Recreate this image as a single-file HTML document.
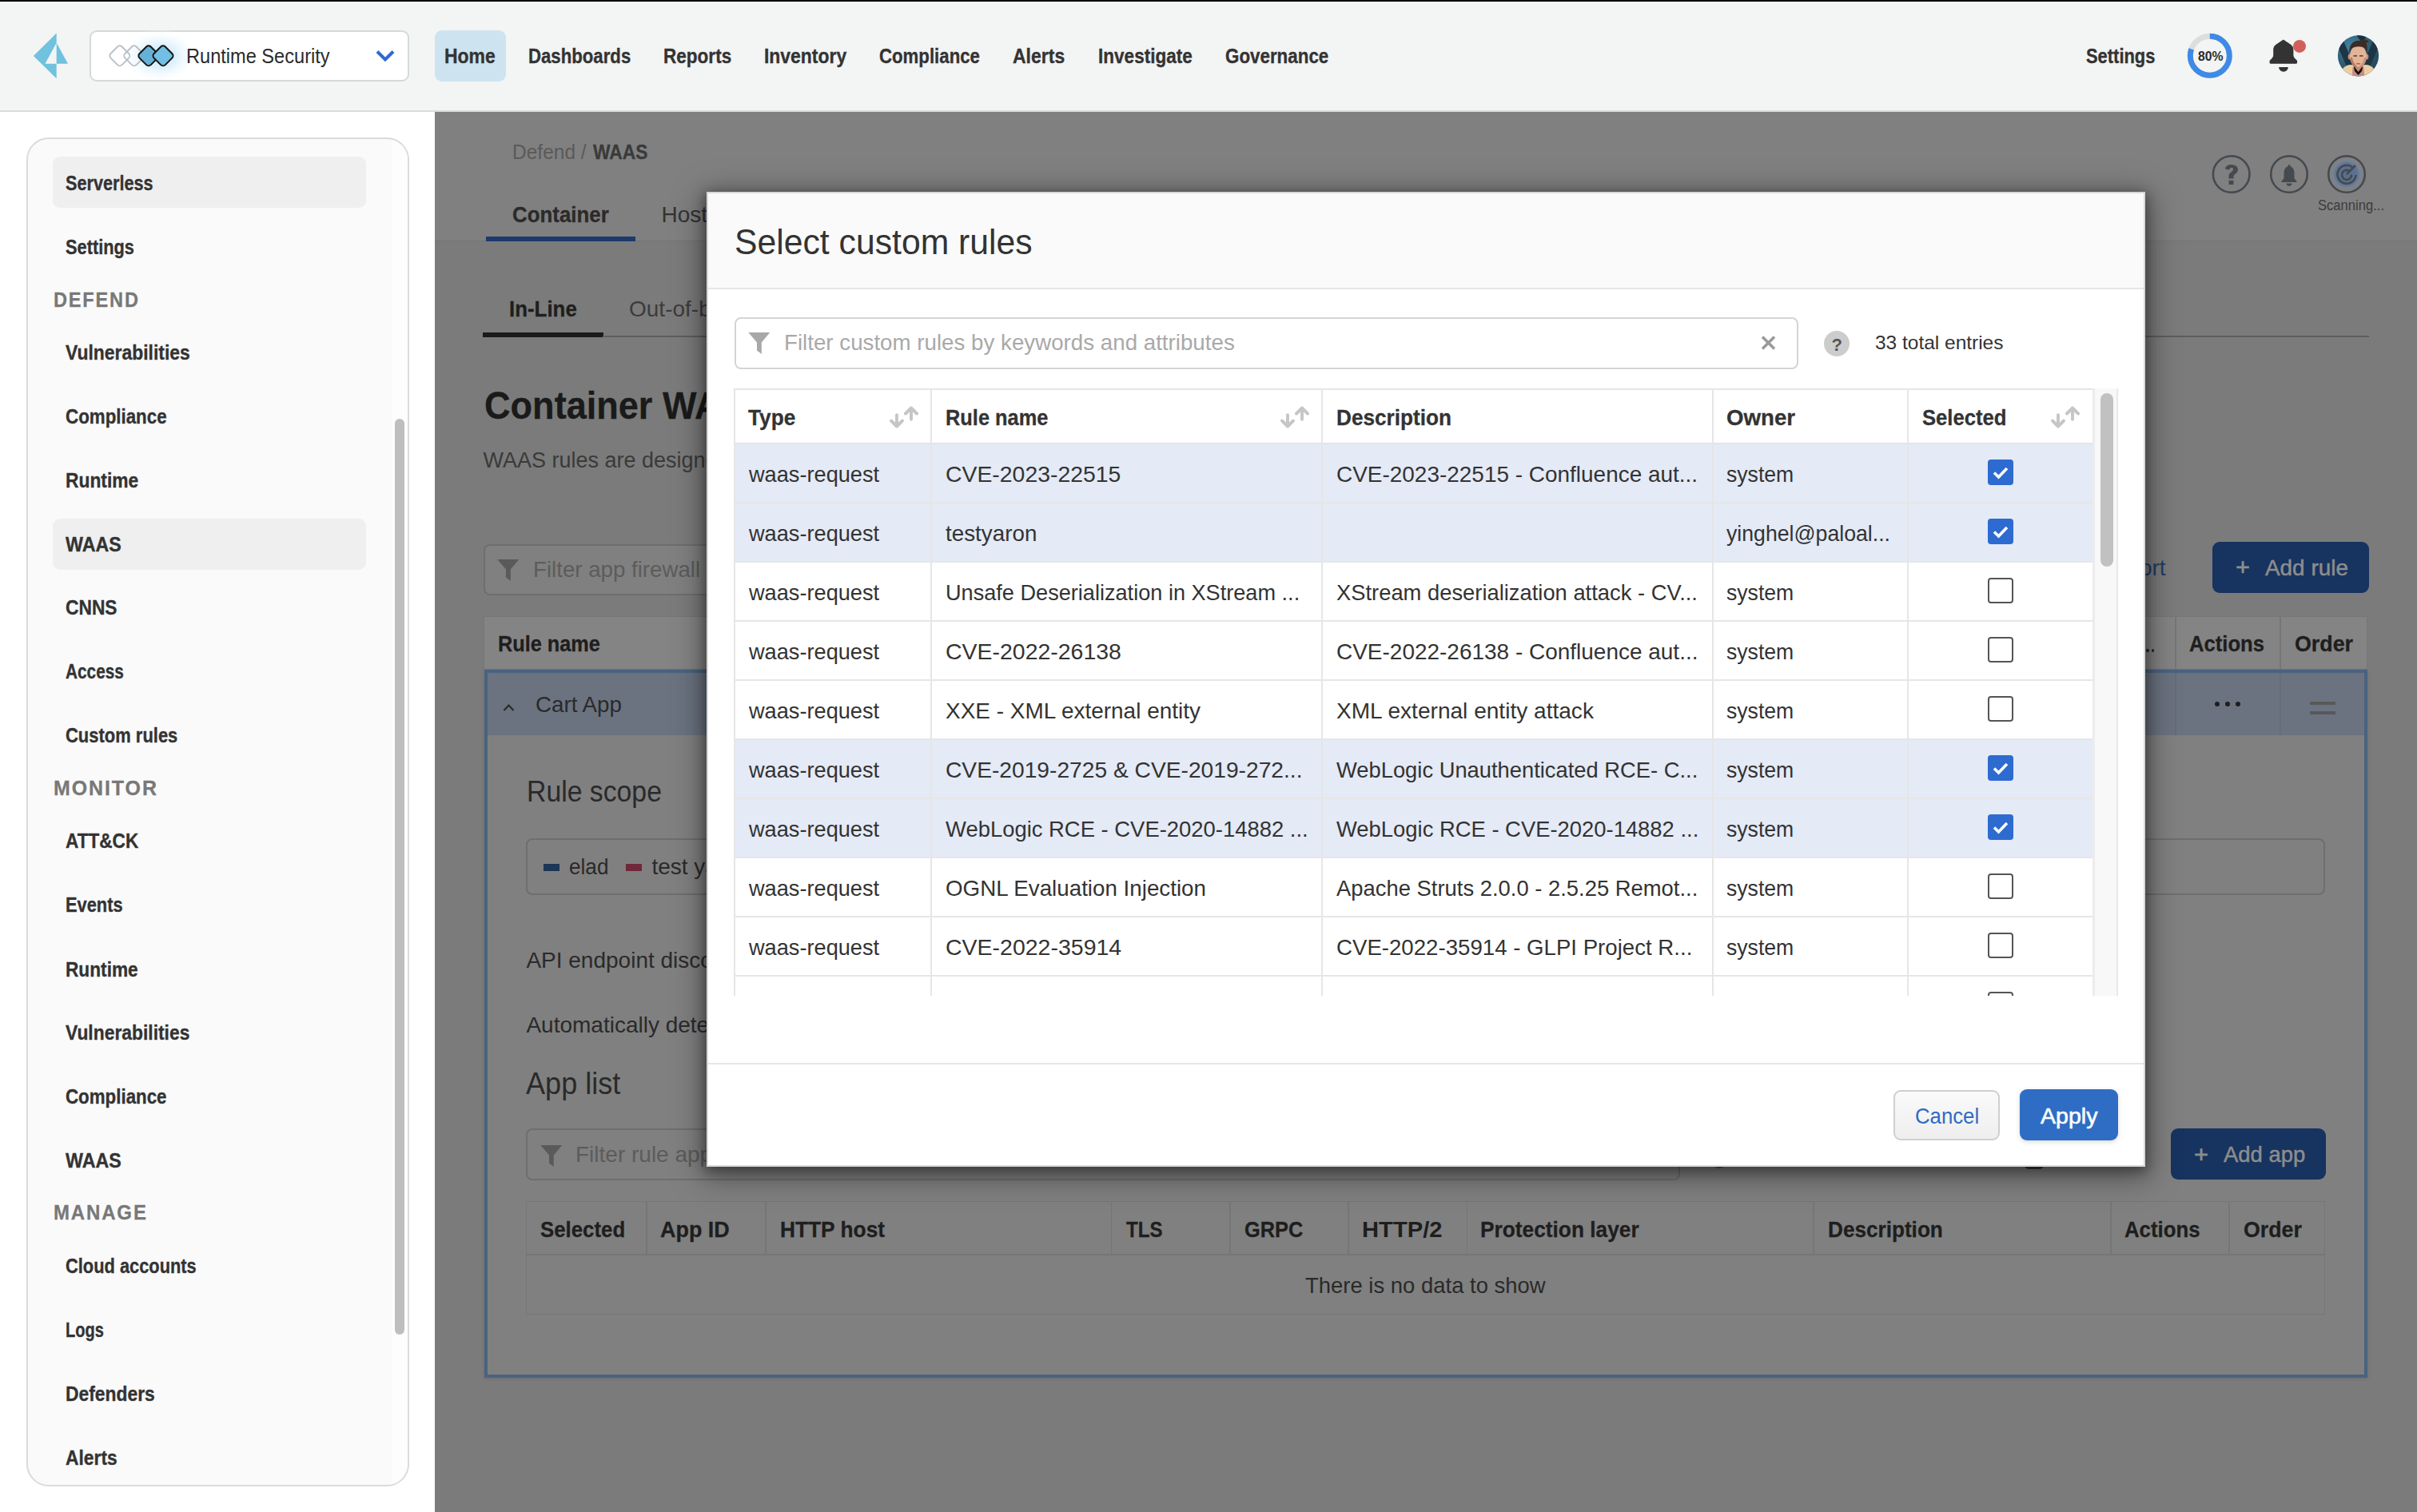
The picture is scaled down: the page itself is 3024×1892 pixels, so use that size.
<!DOCTYPE html>
<html><head><meta charset="utf-8"><title>Select custom rules</title>
<style>
html,body{margin:0;padding:0;}
body{width:3024px;height:1892px;position:relative;overflow:hidden;background:#fff;font-family:"Liberation Sans", sans-serif;}
div{font-family:"Liberation Sans", sans-serif;}
</style></head><body>
<div style="position:absolute;left:0px;top:0px;width:3024px;height:2px;background:#000"></div>
<div style="position:absolute;left:0px;top:2px;width:3024px;height:136px;background:#f3f4f4"></div>
<div style="position:absolute;left:0px;top:138px;width:3024px;height:2px;background:#d9dcdc"></div>
<div style="position:absolute;left:0px;top:140px;width:544px;height:1752px;background:#ffffff"></div>
<svg style="position:absolute;left:0;top:0" width="100" height="110">
<polygon fill="#70c2de" points="41.9,69.9 70.7,41.4 70.7,53.5 56.5,79.7 70.7,79.7 70.7,98.3"/>
<polygon fill="#70c2de" points="70.7,53.5 85,79.7 70.7,79.7"/>
</svg>
<div style="position:absolute;left:112px;top:38px;width:400px;height:64px;background:#fff;border:2px solid #d6d9d9;border-radius:9px;box-sizing:border-box"></div>
<svg style="position:absolute;left:110px;top:36px" width="150" height="64">
<defs><radialGradient id="glow" cx="0.5" cy="0.5" r="0.5"><stop offset="0" stop-color="#cdeaf8"/><stop offset="0.45" stop-color="#dff2fb"/><stop offset="1" stop-color="#ffffff" stop-opacity="0"/></radialGradient></defs>
<ellipse cx="90" cy="34" rx="48" ry="34" fill="url(#glow)"/>
<g>
<rect x="-10" y="-10" width="20" height="20" rx="4" transform="translate(39.8,33.8) rotate(45)" fill="none" stroke="#b9c0cb" stroke-width="1.9"/>
<rect x="-10" y="-10" width="20" height="20" rx="4" transform="translate(57.8,33.8) rotate(45)" fill="none" stroke="#b9c0cb" stroke-width="1.9"/>
<rect x="-10" y="-10" width="20" height="20" rx="4" transform="translate(75.9,33.8) rotate(45)" fill="#66b1d8" stroke="#151515" stroke-width="2"/>
<rect x="-10" y="-10" width="20" height="20" rx="4" transform="translate(94,33.8) rotate(45)" fill="#72bee4" stroke="#151515" stroke-width="2"/>
</g></svg>
<div style="position:absolute;left:233.0px;top:57.0px;font-size:26px;line-height:26px;font-weight:400;color:#2b2b2b;white-space:nowrap;transform:scaleX(0.9071);transform-origin:0 0;">Runtime Security</div>
<svg style="position:absolute;left:466px;top:58px" width="32" height="24"><polyline points="6,6.5 16,16.5 26,6.5" fill="none" stroke="#2f6ad0" stroke-width="4"/></svg>
<div style="position:absolute;left:543.6px;top:38px;width:89.4px;height:64px;background:#cde3ef;border-radius:9px"></div>
<div style="position:absolute;left:556.4px;top:57.4px;font-size:26px;line-height:26px;font-weight:700;color:#333333;white-space:nowrap;transform:scaleX(0.8833);transform-origin:0 0;-webkit-text-stroke:0.35px #333333;">Home</div>
<div style="position:absolute;left:661.0px;top:57.4px;font-size:26px;line-height:26px;font-weight:700;color:#333333;white-space:nowrap;transform:scaleX(0.8533);transform-origin:0 0;-webkit-text-stroke:0.35px #333333;">Dashboards</div>
<div style="position:absolute;left:829.6px;top:57.4px;font-size:26px;line-height:26px;font-weight:700;color:#333333;white-space:nowrap;transform:scaleX(0.8673);transform-origin:0 0;-webkit-text-stroke:0.35px #333333;">Reports</div>
<div style="position:absolute;left:955.7px;top:57.4px;font-size:26px;line-height:26px;font-weight:700;color:#333333;white-space:nowrap;transform:scaleX(0.8814);transform-origin:0 0;-webkit-text-stroke:0.35px #333333;">Inventory</div>
<div style="position:absolute;left:1100.4px;top:57.4px;font-size:26px;line-height:26px;font-weight:700;color:#333333;white-space:nowrap;transform:scaleX(0.8544);transform-origin:0 0;-webkit-text-stroke:0.35px #333333;">Compliance</div>
<div style="position:absolute;left:1267.0px;top:57.4px;font-size:26px;line-height:26px;font-weight:700;color:#333333;white-space:nowrap;transform:scaleX(0.8851);transform-origin:0 0;-webkit-text-stroke:0.35px #333333;">Alerts</div>
<div style="position:absolute;left:1374.0px;top:57.4px;font-size:26px;line-height:26px;font-weight:700;color:#333333;white-space:nowrap;transform:scaleX(0.8676);transform-origin:0 0;-webkit-text-stroke:0.35px #333333;">Investigate</div>
<div style="position:absolute;left:1532.8px;top:57.4px;font-size:26px;line-height:26px;font-weight:700;color:#333333;white-space:nowrap;transform:scaleX(0.8600);transform-origin:0 0;-webkit-text-stroke:0.35px #333333;">Governance</div>
<div style="position:absolute;left:2609.5px;top:57.4px;font-size:26px;line-height:26px;font-weight:700;color:#333333;white-space:nowrap;transform:scaleX(0.8427);transform-origin:0 0;-webkit-text-stroke:0.35px #333333;">Settings</div>
<svg style="position:absolute;left:2730px;top:35px" width="70" height="70">
<circle cx="34.8" cy="34.7" r="24.5" fill="none" stroke="#dddddd" stroke-width="7"/>
<circle cx="34.8" cy="34.7" r="24.5" fill="none" stroke="#3e8ae6" stroke-width="7" stroke-dasharray="123.15 200" transform="rotate(-90 34.8 34.7)"/>
</svg>
<div style="position:absolute;left:2749.5px;top:63.0px;font-size:16px;line-height:16px;font-weight:700;color:#2b2b2b;white-space:nowrap;transform:scaleX(0.9844);transform-origin:0 0;">80%</div>
<svg style="position:absolute;left:2830px;top:40px" width="60" height="56">
<path d="M26.8,9.6 L17.5,15.8 C15,17.6 14.2,19.5 14.2,22.5 L14.2,29 C14.2,31.5 12.5,33 10.2,35.3 C9.2,36.3 9.3,39.7 10.6,39.7 L43.1,39.7 C44.4,39.7 44.5,36.3 43.5,35.3 C41.2,33 39.4,31.5 39.4,29 L39.4,22.5 C39.4,19.5 38.6,17.6 36.1,15.8 Z" fill="#333333"/>
<path d="M21.2,44 L32.8,44 C32.8,47.2 30.2,49.7 27,49.7 C23.8,49.7 21.2,47.2 21.2,44 Z" fill="#333333"/>
<circle cx="47" cy="17.9" r="8" fill="#d2605a"/>
</svg>
<svg style="position:absolute;left:2920px;top:40px" width="62" height="62">
<defs><clipPath id="av"><circle cx="30.5" cy="29.8" r="25.6"/></clipPath>
<radialGradient id="avbg" cx="0.35" cy="0.3" r="0.8"><stop offset="0" stop-color="#4385a6"/><stop offset="0.55" stop-color="#2c566a"/><stop offset="1" stop-color="#203c4c"/></radialGradient></defs>
<g clip-path="url(#av)">
<rect x="0" y="0" width="62" height="62" fill="url(#avbg)"/>
<polygon points="3,14 11,9 29,50 22,57" fill="#1d3545"/>
<polygon points="58,14 50,9 32,50 39,57" fill="#1d3545"/>
<polygon points="27,2 42,2 36,15" fill="#1a3040"/>
<path d="M6,62 L11,46 C15,41 21,40 26,42 L30,62 Z" fill="#eccda0"/>
<path d="M55,62 L50,46 C46,41 40,40 35,42 L31,62 Z" fill="#eccda0"/>
<polygon points="23.5,44 37.5,44 38.5,62 22.5,62" fill="#c48c86"/>
<polygon points="26,39 35,39 34,47 27,47" fill="#c48a6c"/>
<polygon points="24.5,42 30.5,50 36.5,42 35,49 30.5,54 26,49" fill="#181010"/>
<ellipse cx="19.8" cy="31" rx="2.2" ry="3.6" fill="#c98f72"/>
<ellipse cx="41.2" cy="31" rx="2.2" ry="3.6" fill="#c98f72"/>
<ellipse cx="30.5" cy="30.5" rx="10.5" ry="13.8" fill="#e3b496"/>
<path d="M20.5,32 C21,40 25,44.5 30.5,44.5 C27,42 24,38 23,32 Z" fill="#b87c64"/>
<path d="M40.5,32 C40,40 36,44.5 30.5,44.5 C34,42 37,38 38,32 Z" fill="#c9907a"/>
<path d="M19.5,27 C18,15 25,10 32,11 C36,8 41,9.5 44,12.5 L40.5,13.5 C42,17 42,22 41.5,27 L39,20.5 C35,17.5 26,17.5 22,21 Z" fill="#3e2c24"/>
<rect x="24.5" y="29" width="4.5" height="1.8" fill="#6e4a3e"/><rect x="32" y="29" width="4.5" height="1.8" fill="#6e4a3e"/>
<rect x="28" y="39" width="5" height="1.5" fill="#a86a58"/>
</g></svg>
<div style="position:absolute;left:33px;top:172px;width:479px;height:1688px;background:#fafafa;border:2px solid #d9dcdc;border-radius:28px;box-sizing:border-box;overflow:hidden">
<div style="position:absolute;left:455px;top:0;width:21px;height:1683px;background:#fdfdfd"></div>
<div style="position:absolute;left:459px;top:350px;width:12px;height:1146px;background:#bebebe;border-radius:6px"></div>
</div>
<div style="position:absolute;left:66px;top:196px;width:392px;height:64px;background:#efefef;border-radius:9px"></div>
<div style="position:absolute;left:66px;top:648.5px;width:392px;height:64px;background:#efefef;border-radius:9px"></div>
<div style="position:absolute;left:82.2px;top:216.0px;font-size:26px;line-height:26px;font-weight:700;color:#333333;white-space:nowrap;transform:scaleX(0.8333);transform-origin:0 0;-webkit-text-stroke:0.35px #333333;">Serverless</div>
<div style="position:absolute;left:82.2px;top:296.0px;font-size:26px;line-height:26px;font-weight:700;color:#333333;white-space:nowrap;transform:scaleX(0.8379);transform-origin:0 0;-webkit-text-stroke:0.35px #333333;">Settings</div>
<div style="position:absolute;left:82.2px;top:427.8px;font-size:26px;line-height:26px;font-weight:700;color:#333333;white-space:nowrap;transform:scaleX(0.8814);transform-origin:0 0;-webkit-text-stroke:0.35px #333333;">Vulnerabilities</div>
<div style="position:absolute;left:82.2px;top:507.6px;font-size:26px;line-height:26px;font-weight:700;color:#333333;white-space:nowrap;transform:scaleX(0.8592);transform-origin:0 0;-webkit-text-stroke:0.35px #333333;">Compliance</div>
<div style="position:absolute;left:82.2px;top:587.6px;font-size:26px;line-height:26px;font-weight:700;color:#333333;white-space:nowrap;transform:scaleX(0.8779);transform-origin:0 0;-webkit-text-stroke:0.35px #333333;">Runtime</div>
<div style="position:absolute;left:82.2px;top:667.5px;font-size:26px;line-height:26px;font-weight:700;color:#333333;white-space:nowrap;transform:scaleX(0.8949);transform-origin:0 0;-webkit-text-stroke:0.35px #333333;">WAAS</div>
<div style="position:absolute;left:82.2px;top:747.3px;font-size:26px;line-height:26px;font-weight:700;color:#333333;white-space:nowrap;transform:scaleX(0.8757);transform-origin:0 0;-webkit-text-stroke:0.35px #333333;">CNNS</div>
<div style="position:absolute;left:82.2px;top:827.3px;font-size:26px;line-height:26px;font-weight:700;color:#333333;white-space:nowrap;transform:scaleX(0.8000);transform-origin:0 0;-webkit-text-stroke:0.35px #333333;">Access</div>
<div style="position:absolute;left:82.2px;top:907.3px;font-size:26px;line-height:26px;font-weight:700;color:#333333;white-space:nowrap;transform:scaleX(0.8446);transform-origin:0 0;-webkit-text-stroke:0.35px #333333;">Custom rules</div>
<div style="position:absolute;left:82.2px;top:1039.3px;font-size:26px;line-height:26px;font-weight:700;color:#333333;white-space:nowrap;transform:scaleX(0.8695);transform-origin:0 0;-webkit-text-stroke:0.35px #333333;">ATT&amp;CK</div>
<div style="position:absolute;left:82.2px;top:1119.0px;font-size:26px;line-height:26px;font-weight:700;color:#333333;white-space:nowrap;transform:scaleX(0.8400);transform-origin:0 0;-webkit-text-stroke:0.35px #333333;">Events</div>
<div style="position:absolute;left:82.2px;top:1199.5px;font-size:26px;line-height:26px;font-weight:700;color:#333333;white-space:nowrap;transform:scaleX(0.8721);transform-origin:0 0;-webkit-text-stroke:0.35px #333333;">Runtime</div>
<div style="position:absolute;left:82.2px;top:1279.2px;font-size:26px;line-height:26px;font-weight:700;color:#333333;white-space:nowrap;transform:scaleX(0.8791);transform-origin:0 0;-webkit-text-stroke:0.35px #333333;">Vulnerabilities</div>
<div style="position:absolute;left:82.2px;top:1359.2px;font-size:26px;line-height:26px;font-weight:700;color:#333333;white-space:nowrap;transform:scaleX(0.8585);transform-origin:0 0;-webkit-text-stroke:0.35px #333333;">Compliance</div>
<div style="position:absolute;left:82.2px;top:1439.0px;font-size:26px;line-height:26px;font-weight:700;color:#333333;white-space:nowrap;transform:scaleX(0.8949);transform-origin:0 0;-webkit-text-stroke:0.35px #333333;">WAAS</div>
<div style="position:absolute;left:82.2px;top:1570.8px;font-size:26px;line-height:26px;font-weight:700;color:#333333;white-space:nowrap;transform:scaleX(0.8395);transform-origin:0 0;-webkit-text-stroke:0.35px #333333;">Cloud accounts</div>
<div style="position:absolute;left:82.2px;top:1650.6px;font-size:26px;line-height:26px;font-weight:700;color:#333333;white-space:nowrap;transform:scaleX(0.7710);transform-origin:0 0;-webkit-text-stroke:0.35px #333333;">Logs</div>
<div style="position:absolute;left:82.2px;top:1730.6px;font-size:26px;line-height:26px;font-weight:700;color:#333333;white-space:nowrap;transform:scaleX(0.8787);transform-origin:0 0;-webkit-text-stroke:0.35px #333333;">Defenders</div>
<div style="position:absolute;left:82.2px;top:1810.8px;font-size:26px;line-height:26px;font-weight:700;color:#333333;white-space:nowrap;transform:scaleX(0.8784);transform-origin:0 0;-webkit-text-stroke:0.35px #333333;">Alerts</div>
<div style="position:absolute;left:66.6px;top:361.8px;font-size:26px;line-height:26px;font-weight:700;color:#787878;white-space:nowrap;transform:scaleX(0.9060);transform-origin:0 0;letter-spacing:2px;-webkit-text-stroke:0.3px #787878;">DEFEND</div>
<div style="position:absolute;left:66.6px;top:973.0px;font-size:26px;line-height:26px;font-weight:700;color:#787878;white-space:nowrap;transform:scaleX(0.9600);transform-origin:0 0;letter-spacing:2px;-webkit-text-stroke:0.3px #787878;">MONITOR</div>
<div style="position:absolute;left:66.6px;top:1504.0px;font-size:26px;line-height:26px;font-weight:700;color:#787878;white-space:nowrap;transform:scaleX(0.9230);transform-origin:0 0;letter-spacing:2px;-webkit-text-stroke:0.3px #787878;">MANAGE</div>
<div style="position:absolute;left:544px;top:140px;width:2480px;height:162px;background:#808080"></div>
<div style="position:absolute;left:544px;top:301px;width:2480px;height:1.5px;background:#737373"></div>
<div style="position:absolute;left:544px;top:302.5px;width:2480px;height:5px;background:linear-gradient(rgba(0,0,0,0.07),rgba(0,0,0,0))"></div>
<div style="position:absolute;left:544px;top:302px;width:2480px;height:1590px;background:#7b7b7b"></div>
<div style="position:absolute;left:641.0px;top:177.0px;font-size:26px;line-height:26px;font-weight:400;color:#5a5a5a;white-space:nowrap;transform:scaleX(0.9424);transform-origin:0 0;">Defend /</div>
<div style="position:absolute;left:742.0px;top:177.0px;font-size:26px;line-height:26px;font-weight:700;color:#3a3a3a;white-space:nowrap;transform:scaleX(0.8769);transform-origin:0 0;-webkit-text-stroke:0.3px #3a3a3a;">WAAS</div>
<div style="position:absolute;left:641.0px;top:255.3px;font-size:28px;line-height:28px;font-weight:700;color:#2a2a2a;white-space:nowrap;transform:scaleX(0.9237);transform-origin:0 0;-webkit-text-stroke:0.3px #2a2a2a;">Container</div>
<div style="position:absolute;left:608px;top:296px;width:187px;height:6px;background:#1d3a6c"></div>
<div style="position:absolute;left:827.5px;top:255.3px;font-size:28px;line-height:28px;font-weight:400;color:#333333;white-space:nowrap;">Host</div>
<svg style="position:absolute;left:2760px;top:186px" width="210" height="64">
<g fill="none" stroke="#454a50" stroke-width="2.6">
<circle cx="31.7" cy="32" r="22.8"/><circle cx="104" cy="32" r="22.8"/><circle cx="176" cy="32" r="22.8"/></g>
<path d="M24,25.5 C24,18 40,18 40,26 C40,31 34.5,31.5 34.5,35.5 L34.5,37.5 L28.5,37.5 L28.5,34.5 C28.5,29.5 34,29 34,26 C34,23 29.5,23 29.5,26.5 Z" fill="#454a50"/>
<rect x="28.5" y="39.8" width="6" height="5.2" fill="#454a50"/>
<path d="M104,22 C108.5,22 110.5,26 110.5,31 L110.5,36 C110.5,38 112,39 113.5,40.5 L113.5,42 L94.5,42 L94.5,40.5 C96,39 97.5,38 97.5,36 L97.5,31 C97.5,26 99.5,22 104,22 Z" fill="#454a50"/>
<circle cx="104" cy="21.5" r="1.6" fill="#454a50"/>
<path d="M100.5,43.5 L107.5,43.5 C107.5,45.5 106,46.8 104,46.8 C102,46.8 100.5,45.5 100.5,43.5 Z" fill="#454a50"/>
<defs><radialGradient id="scg" cx="0.5" cy="0.5" r="0.5"><stop offset="0" stop-color="#586e8c"/><stop offset="0.7" stop-color="#5c7290"/><stop offset="1" stop-color="#7a8698"/></radialGradient></defs>
<circle cx="176" cy="32" r="18.2" fill="url(#scg)"/>
<g fill="none" stroke="#454a50" stroke-width="2.6"><path d="M183.5,23.5 A11.5,11.5 0 1 0 187.5,33"/><path d="M179.5,28 A6,6 0 1 0 182,32.5"/></g>
<line x1="176" y1="32" x2="187" y2="21" stroke="#454a50" stroke-width="2.6"/>
</svg>
<div style="position:absolute;left:2900.3px;top:247.8px;font-size:18px;line-height:18px;font-weight:400;color:#3c3c3c;white-space:nowrap;transform:scaleX(0.9222);transform-origin:0 0;">Scanning...</div>
<div style="position:absolute;left:637.0px;top:373.3px;font-size:28px;line-height:28px;font-weight:700;color:#1e1e1e;white-space:nowrap;transform:scaleX(0.9239);transform-origin:0 0;-webkit-text-stroke:0.3px #1e1e1e;">In-Line</div>
<div style="position:absolute;left:604px;top:416px;width:150.5px;height:6px;background:#1a1a1a"></div>
<div style="position:absolute;left:754px;top:419.5px;width:2210px;height:2px;background:#5e5e5e"></div>
<div style="position:absolute;left:787.0px;top:373.3px;font-size:28px;line-height:28px;font-weight:400;color:#3c3c3c;white-space:nowrap;">Out-of-band</div>
<div style="position:absolute;left:605.6px;top:482.7px;font-size:49px;line-height:49px;font-weight:700;color:#1a1a1a;white-space:nowrap;transform:scaleX(0.9200);transform-origin:0 0;-webkit-text-stroke:0.3px #1a1a1a;">Container WAAS</div>
<div style="position:absolute;left:604.5px;top:563.1px;font-size:27px;line-height:27px;font-weight:400;color:#3a3a3a;white-space:nowrap;">WAAS rules are designed to protect your apps</div>
<div style="position:absolute;left:604.5px;top:681px;width:2000px;height:64px;border:2px solid #6e6e6e;border-radius:8px;box-sizing:border-box;background:#808080"></div>
<svg style="position:absolute;left:620px;top:698px" width="32" height="32"><path d="M2.3,2 L29.3,2 L18.8,14.5 L18.8,29 L13,24.5 L13,14.5 Z" fill="#5a5a5a"/></svg>
<div style="position:absolute;left:667.0px;top:698.8px;font-size:28px;line-height:28px;font-weight:400;color:#5c5c5c;white-space:nowrap;transform:scaleX(0.9882);transform-origin:0 0;">Filter app firewall rules</div>
<div style="position:absolute;left:2628.7px;top:697.0px;font-size:28px;line-height:28px;font-weight:400;color:#1f3c66;white-space:nowrap;">Export</div>
<div style="position:absolute;left:2768px;top:678px;width:196px;height:64px;background:#17335f;border-radius:9px"></div>
<div style="position:absolute;left:2796.8px;top:695.3px;font-size:30px;line-height:30px;font-weight:400;color:#8d8d8d;white-space:nowrap;transform:scaleX(1.0278);transform-origin:0 0;-webkit-text-stroke:0.6px #8d8d8d;">+</div>
<div style="position:absolute;left:2833.7px;top:697.0px;font-size:28px;line-height:28px;font-weight:400;color:#8d8d8d;white-space:nowrap;transform:scaleX(0.9962);transform-origin:0 0;-webkit-text-stroke:0.5px #8d8d8d;">Add rule</div>
<div style="position:absolute;left:605px;top:771px;width:2357px;height:67px;background:#848484;border:1.5px solid #767676;box-sizing:border-box"></div>
<div style="position:absolute;left:623.3px;top:791.8px;font-size:28px;line-height:28px;font-weight:700;color:#1e1e1e;white-space:nowrap;transform:scaleX(0.9035);transform-origin:0 0;-webkit-text-stroke:0.3px #1e1e1e;">Rule name</div>
<div style="position:absolute;left:2721px;top:771px;width:2px;height:67px;background:#767676"></div>
<div style="position:absolute;left:2852px;top:771px;width:2px;height:67px;background:#767676"></div>
<div style="position:absolute;left:2739.4px;top:791.9px;font-size:28px;line-height:28px;font-weight:700;color:#1e1e1e;white-space:nowrap;transform:scaleX(0.9155);transform-origin:0 0;-webkit-text-stroke:0.3px #1e1e1e;">Actions</div>
<div style="position:absolute;left:2685px;top:812px;width:3.5px;height:3.5px;background:#2a2a2a;border-radius:50%"></div>
<div style="position:absolute;left:2691.5px;top:812px;width:3.5px;height:3.5px;background:#2a2a2a;border-radius:50%"></div>
<div style="position:absolute;left:2870.6px;top:791.9px;font-size:28px;line-height:28px;font-weight:700;color:#1e1e1e;white-space:nowrap;transform:scaleX(0.9579);transform-origin:0 0;-webkit-text-stroke:0.3px #1e1e1e;">Order</div>
<div style="position:absolute;left:605.5px;top:838px;width:2356.5px;height:886px;background:#808080;border:4px solid #49637f;box-sizing:border-box;box-shadow:0 1px 4px rgba(0,0,0,0.12)"></div>
<div style="position:absolute;left:609.5px;top:842px;width:2348.5px;height:78px;background:#6b7380"></div>
<div style="position:absolute;left:2721px;top:842px;width:2px;height:78px;background:#666d78"></div>
<div style="position:absolute;left:2852px;top:842px;width:2px;height:78px;background:#666d78"></div>
<svg style="position:absolute;left:626px;top:874px" width="22" height="20"><polyline points="4.5,15 10.5,8.5 16.5,15" fill="none" stroke="#2a2a2a" stroke-width="2.2"/></svg>
<div style="position:absolute;left:669.6px;top:868.3px;font-size:28px;line-height:28px;font-weight:400;color:#2a2a2a;white-space:nowrap;transform:scaleX(0.9908);transform-origin:0 0;">Cart App</div>
<div style="position:absolute;left:2771px;top:877.5px;width:6px;height:6px;background:#1e1e1e;border-radius:50%"></div>
<div style="position:absolute;left:2784px;top:877.5px;width:6px;height:6px;background:#1e1e1e;border-radius:50%"></div>
<div style="position:absolute;left:2797px;top:877.5px;width:6px;height:6px;background:#1e1e1e;border-radius:50%"></div>
<div style="position:absolute;left:2890px;top:878px;width:32px;height:3.6px;background:#585858"></div>
<div style="position:absolute;left:2890px;top:890px;width:32px;height:3.6px;background:#585858"></div>
<div style="position:absolute;left:659.0px;top:973.1px;font-size:36px;line-height:36px;font-weight:400;color:#2a2a2a;white-space:nowrap;transform:scaleX(0.9378);transform-origin:0 0;">Rule scope</div>
<div style="position:absolute;left:658.4px;top:1048.6px;width:2251px;height:71px;border:2px solid #6e6e6e;border-radius:8px;box-sizing:border-box"></div>
<div style="position:absolute;left:680.4px;top:1081px;width:19.4px;height:9px;background:#1d3557"></div>
<div style="position:absolute;left:712.0px;top:1071.3px;font-size:28px;line-height:28px;font-weight:400;color:#2a2a2a;white-space:nowrap;transform:scaleX(0.9340);transform-origin:0 0;">elad</div>
<div style="position:absolute;left:783px;top:1081px;width:20px;height:9px;background:#70283a"></div>
<div style="position:absolute;left:815.4px;top:1071.3px;font-size:28px;line-height:28px;font-weight:400;color:#2a2a2a;white-space:nowrap;">test yaron</div>
<div style="position:absolute;left:658.4px;top:1187.8px;font-size:28px;line-height:28px;font-weight:400;color:#2a2a2a;white-space:nowrap;">API endpoint discovery</div>
<div style="position:absolute;left:658.4px;top:1268.9px;font-size:28px;line-height:28px;font-weight:400;color:#2a2a2a;white-space:nowrap;">Automatically detect API endpoints</div>
<div style="position:absolute;left:658.4px;top:1337.3px;font-size:38px;line-height:38px;font-weight:400;color:#2a2a2a;white-space:nowrap;transform:scaleX(0.9496);transform-origin:0 0;">App list</div>
<div style="position:absolute;left:658.4px;top:1412px;width:1444px;height:65px;border:2px solid #6e6e6e;border-radius:8px;box-sizing:border-box"></div>
<svg style="position:absolute;left:674px;top:1431px" width="32" height="32"><path d="M2.3,2 L29.3,2 L18.8,14.5 L18.8,29 L13,24.5 L13,14.5 Z" fill="#5a5a5a"/></svg>
<div style="position:absolute;left:720.0px;top:1431.3px;font-size:28px;line-height:28px;font-weight:400;color:#5c5c5c;white-space:nowrap;">Filter rule app list</div>
<div style="position:absolute;left:2716px;top:1412.4px;width:194px;height:63.2px;background:#17335f;border-radius:9px"></div>
<div style="position:absolute;left:2744.5px;top:1429.6px;font-size:30px;line-height:30px;font-weight:400;color:#8d8d8d;white-space:nowrap;transform:scaleX(1.0278);transform-origin:0 0;-webkit-text-stroke:0.6px #8d8d8d;">+</div>
<div style="position:absolute;left:2781.5px;top:1431.3px;font-size:28px;line-height:28px;font-weight:400;color:#8d8d8d;white-space:nowrap;transform:scaleX(0.9808);transform-origin:0 0;-webkit-text-stroke:0.5px #8d8d8d;">Add app</div>
<div style="position:absolute;left:658.4px;top:1503px;width:2250.3px;height:142px;border:1.5px solid #767676;box-sizing:border-box"></div>
<div style="position:absolute;left:658.4px;top:1569px;width:2250.3px;height:1.5px;background:#767676"></div>
<div style="position:absolute;left:808.25px;top:1503px;width:1.5px;height:67px;background:#767676"></div>
<div style="position:absolute;left:957.25px;top:1503px;width:1.5px;height:67px;background:#767676"></div>
<div style="position:absolute;left:1389.85px;top:1503px;width:1.5px;height:67px;background:#767676"></div>
<div style="position:absolute;left:1538.25px;top:1503px;width:1.5px;height:67px;background:#767676"></div>
<div style="position:absolute;left:1686.25px;top:1503px;width:1.5px;height:67px;background:#767676"></div>
<div style="position:absolute;left:1834.75px;top:1503px;width:1.5px;height:67px;background:#767676"></div>
<div style="position:absolute;left:2268.25px;top:1503px;width:1.5px;height:67px;background:#767676"></div>
<div style="position:absolute;left:2640.25px;top:1503px;width:1.5px;height:67px;background:#767676"></div>
<div style="position:absolute;left:2788.25px;top:1503px;width:1.5px;height:67px;background:#767676"></div>
<div style="position:absolute;left:676.2px;top:1525.1px;font-size:28px;line-height:28px;font-weight:700;color:#1e1e1e;white-space:nowrap;transform:scaleX(0.9217);transform-origin:0 0;-webkit-text-stroke:0.3px #1e1e1e;">Selected</div>
<div style="position:absolute;left:826.0px;top:1525.1px;font-size:28px;line-height:28px;font-weight:700;color:#1e1e1e;white-space:nowrap;transform:scaleX(0.9622);transform-origin:0 0;-webkit-text-stroke:0.3px #1e1e1e;">App ID</div>
<div style="position:absolute;left:975.7px;top:1525.1px;font-size:28px;line-height:28px;font-weight:700;color:#1e1e1e;white-space:nowrap;transform:scaleX(0.9393);transform-origin:0 0;-webkit-text-stroke:0.3px #1e1e1e;">HTTP host</div>
<div style="position:absolute;left:1409.4px;top:1525.1px;font-size:28px;line-height:28px;font-weight:700;color:#1e1e1e;white-space:nowrap;transform:scaleX(0.8623);transform-origin:0 0;-webkit-text-stroke:0.3px #1e1e1e;">TLS</div>
<div style="position:absolute;left:1556.6px;top:1525.1px;font-size:28px;line-height:28px;font-weight:700;color:#1e1e1e;white-space:nowrap;transform:scaleX(0.9049);transform-origin:0 0;-webkit-text-stroke:0.3px #1e1e1e;">GRPC</div>
<div style="position:absolute;left:1704.4px;top:1525.1px;font-size:28px;line-height:28px;font-weight:700;color:#1e1e1e;white-space:nowrap;transform:scaleX(1.0417);transform-origin:0 0;">HTTP/2</div>
<div style="position:absolute;left:1852.3px;top:1525.1px;font-size:28px;line-height:28px;font-weight:700;color:#1e1e1e;white-space:nowrap;transform:scaleX(0.9387);transform-origin:0 0;-webkit-text-stroke:0.3px #1e1e1e;">Protection layer</div>
<div style="position:absolute;left:2287.0px;top:1525.1px;font-size:28px;line-height:28px;font-weight:700;color:#1e1e1e;white-space:nowrap;transform:scaleX(0.9338);transform-origin:0 0;-webkit-text-stroke:0.3px #1e1e1e;">Description</div>
<div style="position:absolute;left:2658.0px;top:1525.1px;font-size:28px;line-height:28px;font-weight:700;color:#1e1e1e;white-space:nowrap;transform:scaleX(0.9204);transform-origin:0 0;-webkit-text-stroke:0.3px #1e1e1e;">Actions</div>
<div style="position:absolute;left:2806.6px;top:1525.1px;font-size:28px;line-height:28px;font-weight:700;color:#1e1e1e;white-space:nowrap;transform:scaleX(0.9553);transform-origin:0 0;-webkit-text-stroke:0.3px #1e1e1e;">Order</div>
<div style="position:absolute;left:1633.0px;top:1595.3px;font-size:28px;line-height:28px;font-weight:400;color:#2a2a2a;white-space:nowrap;transform:scaleX(0.9805);transform-origin:0 0;">There is no data to show</div>
<div style="position:absolute;left:2141px;top:1448px;width:20px;height:14px;background:#4e4e4e;border-radius:0 0 10px 10px"></div>
<div style="position:absolute;left:2533px;top:1448px;width:24px;height:14.5px;background:#383838;border-radius:0 0 5px 5px"></div>
<div style="position:absolute;left:884px;top:240px;width:1800px;height:1220px;background:#fff;border:2px solid #d9d9d9;box-sizing:border-box;box-shadow:0 4px 14px 2px rgba(0,0,0,0.34),0 8px 36px 6px rgba(0,0,0,0.36)"></div>
<div style="position:absolute;left:886px;top:242px;width:1796px;height:118.5px;background:#fafafa"></div>
<div style="position:absolute;left:886px;top:360px;width:1796px;height:2px;background:#e6e6e6"></div>
<div style="position:absolute;left:919.0px;top:281.4px;font-size:44px;line-height:44px;font-weight:400;color:#333333;white-space:nowrap;transform:scaleX(0.9706);transform-origin:0 0;">Select custom rules</div>
<div style="position:absolute;left:919px;top:397px;width:1331px;height:64.5px;border:2px solid #d4d4d4;border-radius:8px;box-sizing:border-box;background:#fff"></div>
<svg style="position:absolute;left:934px;top:414px" width="32" height="32"><path d="M2.3,2 L29.3,2 L18.8,14.5 L18.8,29 L13,24.5 L13,14.5 Z" fill="#a8a8a8"/></svg>
<div style="position:absolute;left:980.6px;top:415.0px;font-size:28px;line-height:28px;font-weight:400;color:#a9a9a9;white-space:nowrap;transform:scaleX(0.9898);transform-origin:0 0;">Filter custom rules by keywords and attributes</div>
<svg style="position:absolute;left:2200px;top:417px" width="26" height="24"><g stroke="#9a9a9a" stroke-width="3.6"><line x1="5" y1="4.5" x2="20" y2="19.5"/><line x1="20" y1="4.5" x2="5" y2="19.5"/></g></svg>
<div style="position:absolute;left:2282px;top:414px;width:32px;height:32px;border-radius:50%;background:#cccccc"></div>
<div style="position:absolute;left:2291.5px;top:421.4px;font-size:22px;line-height:22px;font-weight:700;color:#555555;white-space:nowrap;">?</div>
<div style="position:absolute;left:2346.0px;top:416.7px;font-size:24px;line-height:24px;font-weight:400;color:#333333;white-space:nowrap;transform:scaleX(1.0191);transform-origin:0 0;">33 total entries</div>
<div style="position:absolute;left:919px;top:486px;width:1699px;height:2px;background:#e6e6e6"></div>
<div style="position:absolute;left:919px;top:553.5px;width:1699px;height:2px;background:#e4e4e4"></div>
<div style="position:absolute;left:918px;top:486px;width:2px;height:759.5px;background:#e6e6e6"></div>
<div style="position:absolute;left:1163.6px;top:486px;width:2px;height:759.5px;background:#e6e6e6"></div>
<div style="position:absolute;left:1652.6px;top:486px;width:2px;height:759.5px;background:#e6e6e6"></div>
<div style="position:absolute;left:2142px;top:486px;width:2px;height:759.5px;background:#e6e6e6"></div>
<div style="position:absolute;left:2386px;top:486px;width:2px;height:759.5px;background:#e6e6e6"></div>
<div style="position:absolute;left:936.2px;top:508.5px;font-size:28px;line-height:28px;font-weight:700;color:#333333;white-space:nowrap;transform:scaleX(0.9365);transform-origin:0 0;-webkit-text-stroke:0.3px #333333;">Type</div>
<div style="position:absolute;left:1183.2px;top:508.5px;font-size:28px;line-height:28px;font-weight:700;color:#333333;white-space:nowrap;transform:scaleX(0.9070);transform-origin:0 0;-webkit-text-stroke:0.3px #333333;">Rule name</div>
<div style="position:absolute;left:1671.6px;top:508.5px;font-size:28px;line-height:28px;font-weight:700;color:#333333;white-space:nowrap;transform:scaleX(0.9344);transform-origin:0 0;-webkit-text-stroke:0.3px #333333;">Description</div>
<div style="position:absolute;left:2159.7px;top:508.5px;font-size:28px;line-height:28px;font-weight:700;color:#333333;white-space:nowrap;transform:scaleX(0.9885);transform-origin:0 0;-webkit-text-stroke:0.3px #333333;">Owner</div>
<div style="position:absolute;left:2404.5px;top:508.5px;font-size:28px;line-height:28px;font-weight:700;color:#333333;white-space:nowrap;transform:scaleX(0.9157);transform-origin:0 0;-webkit-text-stroke:0.3px #333333;">Selected</div>
<svg style="position:absolute;left:1110px;top:506px" width="44" height="34"><g fill="none" stroke="#c6c6c6" stroke-width="3.9" stroke-linecap="round" stroke-linejoin="round"><path d="M12,13.3 L12,27.5 M5,20.5 L12,27.5 L19,20.5"/><path d="M30,18.7 L30,4.5 M23,11.5 L30,4.5 L37,11.5"/></g></svg>
<svg style="position:absolute;left:1599px;top:506px" width="44" height="34"><g fill="none" stroke="#c6c6c6" stroke-width="3.9" stroke-linecap="round" stroke-linejoin="round"><path d="M12,13.3 L12,27.5 M5,20.5 L12,27.5 L19,20.5"/><path d="M30,18.7 L30,4.5 M23,11.5 L30,4.5 L37,11.5"/></g></svg>
<svg style="position:absolute;left:2563px;top:506px" width="44" height="34"><g fill="none" stroke="#c6c6c6" stroke-width="3.9" stroke-linecap="round" stroke-linejoin="round"><path d="M12,13.3 L12,27.5 M5,20.5 L12,27.5 L19,20.5"/><path d="M30,18.7 L30,4.5 M23,11.5 L30,4.5 L37,11.5"/></g></svg>
<div style="position:absolute;left:919px;top:555.5px;width:1699px;height:690px;overflow:hidden">
<div style="position:absolute;left:0;top:0px;width:1699px;height:74px;background:#e4eaf6"></div>
<div style="position:absolute;left:0;top:72px;width:1699px;height:2px;background:#e6e6e6"></div>
<div style="position:absolute;left:-1px;top:0px;width:2px;height:74px;background:#e6e6e6"></div>
<div style="position:absolute;left:244.5999999999999px;top:0px;width:2px;height:74px;background:#e6e6e6"></div>
<div style="position:absolute;left:733.5999999999999px;top:0px;width:2px;height:74px;background:#e6e6e6"></div>
<div style="position:absolute;left:1223px;top:0px;width:2px;height:74px;background:#e6e6e6"></div>
<div style="position:absolute;left:1467px;top:0px;width:2px;height:74px;background:#e6e6e6"></div>
<div style="position:absolute;left:18.4px;top:24.6px;font-size:28px;line-height:28px;font-weight:400;color:#333333;white-space:nowrap;transform:scaleX(0.9704);transform-origin:0 0;">waas-request</div>
<div style="position:absolute;left:264.0px;top:24.6px;font-size:28px;line-height:28px;font-weight:400;color:#333333;white-space:nowrap;transform:scaleX(1.0139);transform-origin:0 0;">CVE-2023-22515</div>
<div style="position:absolute;left:752.6px;top:24.6px;font-size:28px;line-height:28px;font-weight:400;color:#333333;white-space:nowrap;transform:scaleX(0.9982);transform-origin:0 0;">CVE-2023-22515 - Confluence aut...</div>
<div style="position:absolute;left:1240.7px;top:24.6px;font-size:28px;line-height:28px;font-weight:400;color:#333333;white-space:nowrap;transform:scaleX(0.9506);transform-origin:0 0;">system</div>
<div style="position:absolute;left:1568.4px;top:19px;width:32px;height:32px;background:#2e6bd0;border-radius:4px"></div>
<svg style="position:absolute;left:1568.4px;top:19px" width="32" height="32"><polyline points="8,16.5 13.5,22 24,11" fill="none" stroke="#fff" stroke-width="3.6"/></svg>
<div style="position:absolute;left:0;top:74px;width:1699px;height:74px;background:#e4eaf6"></div>
<div style="position:absolute;left:0;top:146px;width:1699px;height:2px;background:#e6e6e6"></div>
<div style="position:absolute;left:-1px;top:74px;width:2px;height:74px;background:#e6e6e6"></div>
<div style="position:absolute;left:244.5999999999999px;top:74px;width:2px;height:74px;background:#e6e6e6"></div>
<div style="position:absolute;left:733.5999999999999px;top:74px;width:2px;height:74px;background:#e6e6e6"></div>
<div style="position:absolute;left:1223px;top:74px;width:2px;height:74px;background:#e6e6e6"></div>
<div style="position:absolute;left:1467px;top:74px;width:2px;height:74px;background:#e6e6e6"></div>
<div style="position:absolute;left:18.4px;top:98.6px;font-size:28px;line-height:28px;font-weight:400;color:#333333;white-space:nowrap;transform:scaleX(0.9704);transform-origin:0 0;">waas-request</div>
<div style="position:absolute;left:264.0px;top:98.6px;font-size:28px;line-height:28px;font-weight:400;color:#333333;white-space:nowrap;transform:scaleX(0.9930);transform-origin:0 0;">testyaron</div>
<div style="position:absolute;left:1240.7px;top:98.6px;font-size:28px;line-height:28px;font-weight:400;color:#333333;white-space:nowrap;transform:scaleX(0.9526);transform-origin:0 0;">yinghel@paloal...</div>
<div style="position:absolute;left:1568.4px;top:93px;width:32px;height:32px;background:#2e6bd0;border-radius:4px"></div>
<svg style="position:absolute;left:1568.4px;top:93px" width="32" height="32"><polyline points="8,16.5 13.5,22 24,11" fill="none" stroke="#fff" stroke-width="3.6"/></svg>
<div style="position:absolute;left:0;top:148px;width:1699px;height:74px;background:#ffffff"></div>
<div style="position:absolute;left:0;top:220px;width:1699px;height:2px;background:#e6e6e6"></div>
<div style="position:absolute;left:-1px;top:148px;width:2px;height:74px;background:#e6e6e6"></div>
<div style="position:absolute;left:244.5999999999999px;top:148px;width:2px;height:74px;background:#e6e6e6"></div>
<div style="position:absolute;left:733.5999999999999px;top:148px;width:2px;height:74px;background:#e6e6e6"></div>
<div style="position:absolute;left:1223px;top:148px;width:2px;height:74px;background:#e6e6e6"></div>
<div style="position:absolute;left:1467px;top:148px;width:2px;height:74px;background:#e6e6e6"></div>
<div style="position:absolute;left:18.4px;top:172.6px;font-size:28px;line-height:28px;font-weight:400;color:#333333;white-space:nowrap;transform:scaleX(0.9704);transform-origin:0 0;">waas-request</div>
<div style="position:absolute;left:264.0px;top:172.6px;font-size:28px;line-height:28px;font-weight:400;color:#333333;white-space:nowrap;transform:scaleX(0.9686);transform-origin:0 0;">Unsafe Deserialization in XStream ...</div>
<div style="position:absolute;left:752.6px;top:172.6px;font-size:28px;line-height:28px;font-weight:400;color:#333333;white-space:nowrap;transform:scaleX(0.9767);transform-origin:0 0;">XStream deserialization attack - CV...</div>
<div style="position:absolute;left:1240.7px;top:172.6px;font-size:28px;line-height:28px;font-weight:400;color:#333333;white-space:nowrap;transform:scaleX(0.9506);transform-origin:0 0;">system</div>
<div style="position:absolute;left:1568.4px;top:167px;width:32px;height:32px;background:#fff;border:2px solid #555;border-radius:4px;box-sizing:border-box"></div>
<div style="position:absolute;left:0;top:222px;width:1699px;height:74px;background:#ffffff"></div>
<div style="position:absolute;left:0;top:294px;width:1699px;height:2px;background:#e6e6e6"></div>
<div style="position:absolute;left:-1px;top:222px;width:2px;height:74px;background:#e6e6e6"></div>
<div style="position:absolute;left:244.5999999999999px;top:222px;width:2px;height:74px;background:#e6e6e6"></div>
<div style="position:absolute;left:733.5999999999999px;top:222px;width:2px;height:74px;background:#e6e6e6"></div>
<div style="position:absolute;left:1223px;top:222px;width:2px;height:74px;background:#e6e6e6"></div>
<div style="position:absolute;left:1467px;top:222px;width:2px;height:74px;background:#e6e6e6"></div>
<div style="position:absolute;left:18.4px;top:246.6px;font-size:28px;line-height:28px;font-weight:400;color:#333333;white-space:nowrap;transform:scaleX(0.9704);transform-origin:0 0;">waas-request</div>
<div style="position:absolute;left:264.0px;top:246.6px;font-size:28px;line-height:28px;font-weight:400;color:#333333;white-space:nowrap;transform:scaleX(1.0162);transform-origin:0 0;">CVE-2022-26138</div>
<div style="position:absolute;left:752.6px;top:246.6px;font-size:28px;line-height:28px;font-weight:400;color:#333333;white-space:nowrap;transform:scaleX(0.9989);transform-origin:0 0;">CVE-2022-26138 - Confluence aut...</div>
<div style="position:absolute;left:1240.7px;top:246.6px;font-size:28px;line-height:28px;font-weight:400;color:#333333;white-space:nowrap;transform:scaleX(0.9506);transform-origin:0 0;">system</div>
<div style="position:absolute;left:1568.4px;top:241px;width:32px;height:32px;background:#fff;border:2px solid #555;border-radius:4px;box-sizing:border-box"></div>
<div style="position:absolute;left:0;top:296px;width:1699px;height:74px;background:#ffffff"></div>
<div style="position:absolute;left:0;top:368px;width:1699px;height:2px;background:#e6e6e6"></div>
<div style="position:absolute;left:-1px;top:296px;width:2px;height:74px;background:#e6e6e6"></div>
<div style="position:absolute;left:244.5999999999999px;top:296px;width:2px;height:74px;background:#e6e6e6"></div>
<div style="position:absolute;left:733.5999999999999px;top:296px;width:2px;height:74px;background:#e6e6e6"></div>
<div style="position:absolute;left:1223px;top:296px;width:2px;height:74px;background:#e6e6e6"></div>
<div style="position:absolute;left:1467px;top:296px;width:2px;height:74px;background:#e6e6e6"></div>
<div style="position:absolute;left:18.4px;top:320.6px;font-size:28px;line-height:28px;font-weight:400;color:#333333;white-space:nowrap;transform:scaleX(0.9704);transform-origin:0 0;">waas-request</div>
<div style="position:absolute;left:264.0px;top:320.6px;font-size:28px;line-height:28px;font-weight:400;color:#333333;white-space:nowrap;transform:scaleX(0.9981);transform-origin:0 0;">XXE - XML external entity</div>
<div style="position:absolute;left:752.6px;top:320.6px;font-size:28px;line-height:28px;font-weight:400;color:#333333;white-space:nowrap;transform:scaleX(1.0025);transform-origin:0 0;">XML external entity attack</div>
<div style="position:absolute;left:1240.7px;top:320.6px;font-size:28px;line-height:28px;font-weight:400;color:#333333;white-space:nowrap;transform:scaleX(0.9506);transform-origin:0 0;">system</div>
<div style="position:absolute;left:1568.4px;top:315px;width:32px;height:32px;background:#fff;border:2px solid #555;border-radius:4px;box-sizing:border-box"></div>
<div style="position:absolute;left:0;top:370px;width:1699px;height:74px;background:#e4eaf6"></div>
<div style="position:absolute;left:0;top:442px;width:1699px;height:2px;background:#e6e6e6"></div>
<div style="position:absolute;left:-1px;top:370px;width:2px;height:74px;background:#e6e6e6"></div>
<div style="position:absolute;left:244.5999999999999px;top:370px;width:2px;height:74px;background:#e6e6e6"></div>
<div style="position:absolute;left:733.5999999999999px;top:370px;width:2px;height:74px;background:#e6e6e6"></div>
<div style="position:absolute;left:1223px;top:370px;width:2px;height:74px;background:#e6e6e6"></div>
<div style="position:absolute;left:1467px;top:370px;width:2px;height:74px;background:#e6e6e6"></div>
<div style="position:absolute;left:18.4px;top:394.6px;font-size:28px;line-height:28px;font-weight:400;color:#333333;white-space:nowrap;transform:scaleX(0.9704);transform-origin:0 0;">waas-request</div>
<div style="position:absolute;left:264.0px;top:394.6px;font-size:28px;line-height:28px;font-weight:400;color:#333333;white-space:nowrap;transform:scaleX(1.0065);transform-origin:0 0;">CVE-2019-2725 &amp; CVE-2019-272...</div>
<div style="position:absolute;left:752.6px;top:394.6px;font-size:28px;line-height:28px;font-weight:400;color:#333333;white-space:nowrap;transform:scaleX(0.9762);transform-origin:0 0;">WebLogic Unauthenticated RCE- C...</div>
<div style="position:absolute;left:1240.7px;top:394.6px;font-size:28px;line-height:28px;font-weight:400;color:#333333;white-space:nowrap;transform:scaleX(0.9506);transform-origin:0 0;">system</div>
<div style="position:absolute;left:1568.4px;top:389px;width:32px;height:32px;background:#2e6bd0;border-radius:4px"></div>
<svg style="position:absolute;left:1568.4px;top:389px" width="32" height="32"><polyline points="8,16.5 13.5,22 24,11" fill="none" stroke="#fff" stroke-width="3.6"/></svg>
<div style="position:absolute;left:0;top:444px;width:1699px;height:74px;background:#e4eaf6"></div>
<div style="position:absolute;left:0;top:516px;width:1699px;height:2px;background:#e6e6e6"></div>
<div style="position:absolute;left:-1px;top:444px;width:2px;height:74px;background:#e6e6e6"></div>
<div style="position:absolute;left:244.5999999999999px;top:444px;width:2px;height:74px;background:#e6e6e6"></div>
<div style="position:absolute;left:733.5999999999999px;top:444px;width:2px;height:74px;background:#e6e6e6"></div>
<div style="position:absolute;left:1223px;top:444px;width:2px;height:74px;background:#e6e6e6"></div>
<div style="position:absolute;left:1467px;top:444px;width:2px;height:74px;background:#e6e6e6"></div>
<div style="position:absolute;left:18.4px;top:468.6px;font-size:28px;line-height:28px;font-weight:400;color:#333333;white-space:nowrap;transform:scaleX(0.9704);transform-origin:0 0;">waas-request</div>
<div style="position:absolute;left:264.0px;top:468.6px;font-size:28px;line-height:28px;font-weight:400;color:#333333;white-space:nowrap;transform:scaleX(0.9793);transform-origin:0 0;">WebLogic RCE - CVE-2020-14882 ...</div>
<div style="position:absolute;left:752.6px;top:468.6px;font-size:28px;line-height:28px;font-weight:400;color:#333333;white-space:nowrap;transform:scaleX(0.9784);transform-origin:0 0;">WebLogic RCE - CVE-2020-14882 ...</div>
<div style="position:absolute;left:1240.7px;top:468.6px;font-size:28px;line-height:28px;font-weight:400;color:#333333;white-space:nowrap;transform:scaleX(0.9506);transform-origin:0 0;">system</div>
<div style="position:absolute;left:1568.4px;top:463px;width:32px;height:32px;background:#2e6bd0;border-radius:4px"></div>
<svg style="position:absolute;left:1568.4px;top:463px" width="32" height="32"><polyline points="8,16.5 13.5,22 24,11" fill="none" stroke="#fff" stroke-width="3.6"/></svg>
<div style="position:absolute;left:0;top:518px;width:1699px;height:74px;background:#ffffff"></div>
<div style="position:absolute;left:0;top:590px;width:1699px;height:2px;background:#e6e6e6"></div>
<div style="position:absolute;left:-1px;top:518px;width:2px;height:74px;background:#e6e6e6"></div>
<div style="position:absolute;left:244.5999999999999px;top:518px;width:2px;height:74px;background:#e6e6e6"></div>
<div style="position:absolute;left:733.5999999999999px;top:518px;width:2px;height:74px;background:#e6e6e6"></div>
<div style="position:absolute;left:1223px;top:518px;width:2px;height:74px;background:#e6e6e6"></div>
<div style="position:absolute;left:1467px;top:518px;width:2px;height:74px;background:#e6e6e6"></div>
<div style="position:absolute;left:18.4px;top:542.6px;font-size:28px;line-height:28px;font-weight:400;color:#333333;white-space:nowrap;transform:scaleX(0.9704);transform-origin:0 0;">waas-request</div>
<div style="position:absolute;left:264.0px;top:542.6px;font-size:28px;line-height:28px;font-weight:400;color:#333333;white-space:nowrap;transform:scaleX(0.9909);transform-origin:0 0;">OGNL Evaluation Injection</div>
<div style="position:absolute;left:752.6px;top:542.6px;font-size:28px;line-height:28px;font-weight:400;color:#333333;white-space:nowrap;transform:scaleX(0.9784);transform-origin:0 0;">Apache Struts 2.0.0 - 2.5.25 Remot...</div>
<div style="position:absolute;left:1240.7px;top:542.6px;font-size:28px;line-height:28px;font-weight:400;color:#333333;white-space:nowrap;transform:scaleX(0.9506);transform-origin:0 0;">system</div>
<div style="position:absolute;left:1568.4px;top:537px;width:32px;height:32px;background:#fff;border:2px solid #555;border-radius:4px;box-sizing:border-box"></div>
<div style="position:absolute;left:0;top:592px;width:1699px;height:74px;background:#ffffff"></div>
<div style="position:absolute;left:0;top:664px;width:1699px;height:2px;background:#e6e6e6"></div>
<div style="position:absolute;left:-1px;top:592px;width:2px;height:74px;background:#e6e6e6"></div>
<div style="position:absolute;left:244.5999999999999px;top:592px;width:2px;height:74px;background:#e6e6e6"></div>
<div style="position:absolute;left:733.5999999999999px;top:592px;width:2px;height:74px;background:#e6e6e6"></div>
<div style="position:absolute;left:1223px;top:592px;width:2px;height:74px;background:#e6e6e6"></div>
<div style="position:absolute;left:1467px;top:592px;width:2px;height:74px;background:#e6e6e6"></div>
<div style="position:absolute;left:18.4px;top:616.6px;font-size:28px;line-height:28px;font-weight:400;color:#333333;white-space:nowrap;transform:scaleX(0.9704);transform-origin:0 0;">waas-request</div>
<div style="position:absolute;left:264.0px;top:616.6px;font-size:28px;line-height:28px;font-weight:400;color:#333333;white-space:nowrap;transform:scaleX(1.0176);transform-origin:0 0;">CVE-2022-35914</div>
<div style="position:absolute;left:752.6px;top:616.6px;font-size:28px;line-height:28px;font-weight:400;color:#333333;white-space:nowrap;transform:scaleX(0.9867);transform-origin:0 0;">CVE-2022-35914 - GLPI Project R...</div>
<div style="position:absolute;left:1240.7px;top:616.6px;font-size:28px;line-height:28px;font-weight:400;color:#333333;white-space:nowrap;transform:scaleX(0.9506);transform-origin:0 0;">system</div>
<div style="position:absolute;left:1568.4px;top:611px;width:32px;height:32px;background:#fff;border:2px solid #555;border-radius:4px;box-sizing:border-box"></div>
<div style="position:absolute;left:0;top:666px;width:1699px;height:74px;background:#ffffff"></div>
<div style="position:absolute;left:0;top:738px;width:1699px;height:2px;background:#e6e6e6"></div>
<div style="position:absolute;left:-1px;top:666px;width:2px;height:74px;background:#e6e6e6"></div>
<div style="position:absolute;left:244.5999999999999px;top:666px;width:2px;height:74px;background:#e6e6e6"></div>
<div style="position:absolute;left:733.5999999999999px;top:666px;width:2px;height:74px;background:#e6e6e6"></div>
<div style="position:absolute;left:1223px;top:666px;width:2px;height:74px;background:#e6e6e6"></div>
<div style="position:absolute;left:1467px;top:666px;width:2px;height:74px;background:#e6e6e6"></div>
<div style="position:absolute;left:1568.4px;top:685px;width:32px;height:32px;background:#fff;border:2px solid #555;border-radius:4px;box-sizing:border-box"></div>
</div>
<div style="position:absolute;left:2618px;top:486px;width:32px;height:759.5px;background:#f8f8f8"></div>
<div style="position:absolute;left:2618px;top:486px;width:3px;height:759.5px;background:#ececec"></div>
<div style="position:absolute;left:2648px;top:486px;width:2px;height:759.5px;background:#e8e8e8"></div>
<div style="position:absolute;left:2628px;top:492px;width:16px;height:217px;background:#c1c1c1;border-radius:8px"></div>
<div style="position:absolute;left:886px;top:1330px;width:1796px;height:2px;background:#e6e6e6"></div>
<div style="position:absolute;left:2369.4px;top:1363.5px;width:133px;height:63px;background:linear-gradient(#fafafa,#eeeeee);border:2px solid #cfcfcf;border-radius:9px;box-sizing:border-box"></div>
<div style="position:absolute;left:2395.8px;top:1382.5px;font-size:28px;line-height:28px;font-weight:400;color:#2e6bc4;white-space:nowrap;transform:scaleX(0.9195);transform-origin:0 0;">Cancel</div>
<div style="position:absolute;left:2527.2px;top:1363px;width:122.6px;height:64px;background:#2f6dc5;border-radius:9px;box-shadow:0 2px 6px rgba(0,0,0,0.15)"></div>
<div style="position:absolute;left:2552.6px;top:1382.5px;font-size:28px;line-height:28px;font-weight:400;color:#ffffff;white-space:nowrap;transform:scaleX(1.0200);transform-origin:0 0;-webkit-text-stroke:0.6px #ffffff;">Apply</div>
<script>(function(){var w=window.innerWidth;if(w&&w<2900){document.body.style.zoom=(w/3024);}})();</script>
</body></html>
